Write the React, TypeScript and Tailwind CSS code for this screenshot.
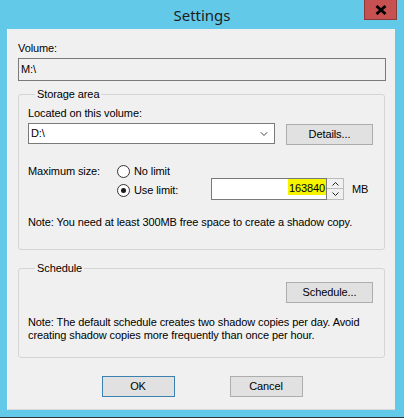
import { ChevronDown } from "lucide-react";

function GroupBox({
  title,
  className,
  children,
}: {
  title: string;
  className?: string;
  children: React.ReactNode;
}) {
  return (
    <fieldset
      className={`rounded-[3px] border border-[#d5d5d5] px-[9px] ${className ?? ""}`}
    >
      <legend className="ml-[7px] px-[2px] h-[13px] leading-[13px]">{title}</legend>
      {children}
    </fieldset>
  );
}

function WinButton({
  label,
  isDefault,
  className,
}: {
  label: string;
  isDefault?: boolean;
  className?: string;
}) {
  return (
    <button
      className={`h-[21px] bg-[#e1e1e1] border leading-[19px] text-black ${
        isDefault ? "border-[#3c7fb1]" : "border-[#adadad]"
      } ${className ?? ""}`}
    >
      {label}
    </button>
  );
}

function Radio({ label, checked }: { label: string; checked?: boolean }) {
  return (
    <div className="flex items-center h-[13px]">
      <span className="w-[13px] h-[13px] rounded-full border border-[#333] bg-white flex items-center justify-center">
        {checked && <span className="w-[5px] h-[5px] rounded-full bg-[#1a1a1a]" />}
      </span>
      <span className="ml-[4px]">{label}</span>
    </div>
  );
}

export default function App() {
  return (
    <div
      className="w-[404px] h-[418px] bg-[#63c9e9] flex flex-col text-[11px] leading-[13px] tracking-[-0.1px] text-black"
      style={{ fontFamily: '"Liberation Sans", Arial, sans-serif' }}
    >
      {/* title bar */}
      <div className="relative h-[29px] flex items-center justify-center">
        <span
          className="text-[15px] tracking-normal text-[#1e1e1e] mt-[2px]"
          style={{ fontFamily: '"Noto Sans", "Open Sans", sans-serif' }}
        >
          Settings
        </span>
        <div className="absolute right-[7px] top-0 w-[33px] h-[20px] bg-[#c75050] border border-[#8c3a3a] border-t-0 flex items-center justify-center">
          <svg width="12" height="10" viewBox="0 0 12 10">
            <path d="M1.5 1 L10.5 9 M10.5 1 L1.5 9" stroke="#000" strokeWidth="2.8" />
          </svg>
        </div>
      </div>

      {/* client area */}
      <div className="ml-[7px] w-[388px] h-[381px] bg-[#f0f0f0] border-l border-white border-b border-b-[#d8d8d8] pl-[10px] pr-[9px] pt-[13px] flex flex-col">
        <div>Volume:</div>
        <div className="mt-[3px] h-[23px] border border-[#7a7a7a] pl-[2px] flex items-center">
          M:\
        </div>

        <GroupBox title="Storage area" className="mt-[7px] pt-[6px] pb-[20px] w-[367px]">
          <div>Located on this volume:</div>
          <div className="mt-[3px] flex items-start h-[22px]">
            <div className="w-[247px] h-[21px] bg-white border border-[#7a7a7a] flex items-center justify-between pl-[2px] pr-[4px]">
              <span>D:\</span>
              <ChevronDown size={12} strokeWidth={2} className="text-[#444]" />
            </div>
            <WinButton label="Details..." className="ml-[11px] mt-[1px] w-[87px]" />
          </div>

          <div className="mt-[20px] flex">
            <div className="w-[89px]">Maximum size:</div>
            <div className="flex flex-col">
              <Radio label="No limit" />
              <div className="flex items-start">
                <div className="mt-[6px] w-[94px]">
                  <Radio label="Use limit:" checked />
                </div>
                <div className="w-[116px] h-[22px] bg-white border border-[#7a7a7a] flex items-start justify-end">
                  <span className="bg-[#f5f500] h-[16px] leading-[18px] pl-[1px] pr-[1px]">163840</span>
                </div>
                <div className="w-[17px] h-[22px] flex flex-col">
                  <div className="h-[11px] bg-[#f0f0f0] border border-[#bcbcbc] border-l-0 flex items-center justify-center">
                    <svg width="7" height="4" viewBox="0 0 7 4">
                      <path d="M0.5 3.5 L3.5 0.5 L6.5 3.5" stroke="#222" fill="none" />
                    </svg>
                  </div>
                  <div className="h-[11px] bg-[#f0f0f0] border border-[#bcbcbc] border-t-0 border-l-0 flex items-center justify-center">
                    <svg width="7" height="4" viewBox="0 0 7 4">
                      <path d="M0.5 0.5 L3.5 3.5 L6.5 0.5" stroke="#222" fill="none" />
                    </svg>
                  </div>
                </div>
                <span className="ml-[8px] mt-[5px]">MB</span>
              </div>
            </div>
          </div>

          <div className="mt-[16px]">
            Note: You need at least 300MB free space to create a shadow copy.
          </div>
        </GroupBox>

        <GroupBox title="Schedule" className="mt-[12px] pt-[7px] pb-[15px] w-[367px]">
          <div className="flex justify-end">
            <WinButton label="Schedule..." className="mr-[2px] w-[87px]" />
          </div>
          <div className="mt-[13px]">
            Note: The default schedule creates two shadow copies per day. Avoid
            <br />
            creating shadow copies more frequently than once per hour.
          </div>
        </GroupBox>

        <div className="mt-[18px] flex justify-center gap-[55px]">
          <WinButton label="OK" isDefault className="w-[73px]" />
          <WinButton label="Cancel" className="w-[73px] border-[#707070]" />
        </div>
      </div>
      <div className="mt-[7px] h-[1px] bg-[#333]" />
    </div>
  );
}
